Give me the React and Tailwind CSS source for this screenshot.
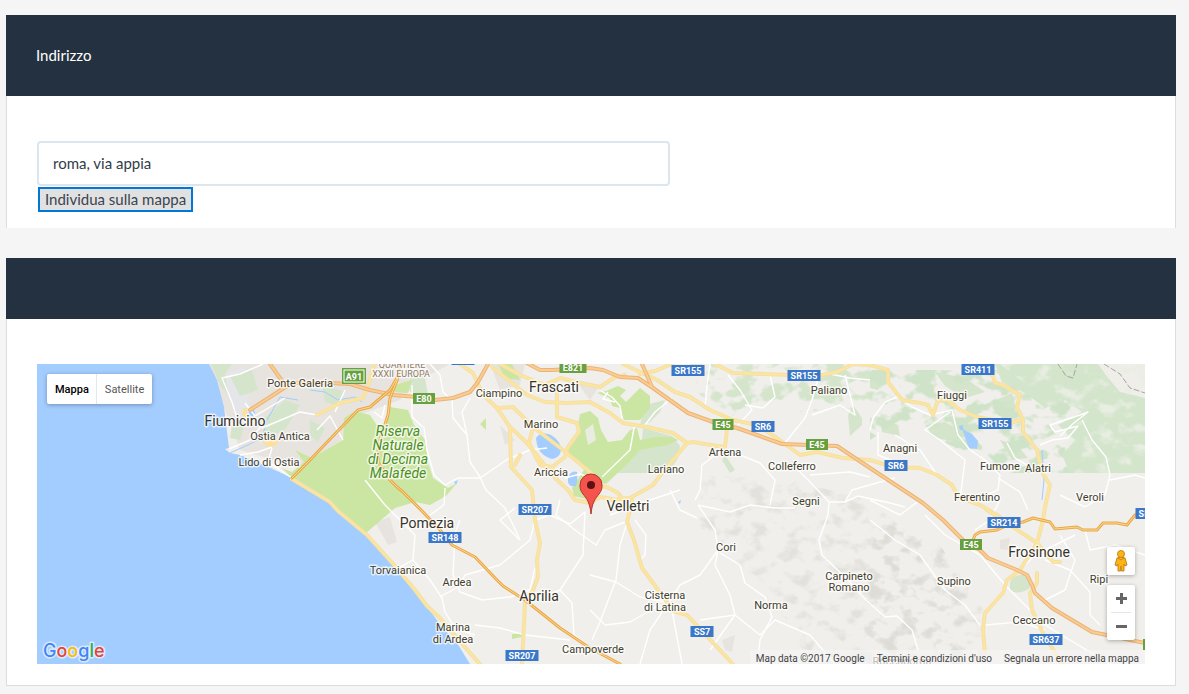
import React, { useState } from "react";

const minorRoads = [
    "M263 364 L240 374 L222 378 L232 402 L237 418 M245 403 L255 416 L285 398 M262 428 L300 412 L317 415",
    "M229 449 L250 440 L262 425 M240 455 L258 452 L272 447 M292 478 L268 462 L272 448",
    "M317 430 L330 416 L343 440 M374 412 L382 418 L385 405 M345 390 L335 412",
    "M412 385 L412 417 L424 428 L427 450 L434 475 L445 485 L458 478 L480 478 L508 459 L530 450 L547 448",
    "M430 364 L440 375 L443 392 L452 400 L453 418 L467 435 L470 462 L480 477 L486 490 L505 508 L520 540",
    "M470 398 L462 412 L467 435 M445 488 L444 505 L430 515",
    "M365 480 L385 505 L400 520 L415 535 L413 560 L430 580 L442 598 L445 612 L455 628 L475 635",
    "M413 560 L400 567 M440 597 L458 587 L465 575 L500 565 L530 540 L535 520",
    "M460 520 L455 533 L453 575 L460 592 L482 600 L510 597 L530 590 L535 568",
    "M475 625 L500 628 L525 635 L570 640 M540 598 L560 590 L572 603 L574 635 L590 647",
    "M520 540 L500 520 L515 508 M535 520 L550 515 L570 524 L585 512 L583 555 L560 590",
    "M560 500 L556 515 L575 530 L596 545 L605 530 L625 522",
    "M627 523 L620 545 L616 580 L600 622 L592 640 M616 582 L640 597 L665 602 M590 575 L616 582 M590 610 L605 625 L630 622 L660 605",
    "M667 605 L650 630 L640 664 M671 605 L682 664 M700 620 L735 615 L760 635 L775 620 L810 635 L835 664",
    "M635 520 L646 535 L645 555 L640 560 M698 505 L715 530 L718 550 L700 575 L680 585 L667 605",
    "M718 550 L715 565 L730 595 L735 615 M720 553 L740 565 L745 583 L765 597 L772 617 L760 640 L757 664 M735 615 L710 650",
    "M602 477 L630 450 L634 428 L637 424 M645 425 L655 412 L672 398",
    "M601 391 L612 397 L620 406 L622 418 M608 392 L603 399 L615 402 M565 478 L580 474 L592 478",
    "M710 364 L707 385 L705 408 M728 375 L740 390 L752 410 L738 425 M770 375 L775 397 L763 408 L745 405",
    "M870 380 L850 378 L820 372 L812 400 L805 418 L785 443 M812 415 L840 405 L855 415 L845 375",
    "M798 470 L808 480 L829 502 L828 515 L819 540 L822 555 L850 582 L866 600 L885 617 L897 616 L912 630 L918 650",
    "M829 502 L845 502 L858 496 L890 503 L905 507 M845 502 L852 490 L880 482 L895 478",
    "M810 475 L850 472 L870 477 M722 450 L702 465 L700 490 L695 500",
    "M728 450 L760 463 L775 480 L770 505 M698 505 L730 512 L750 505 L775 508 L795 508 M670 490 L680 510 L697 518",
    "M610 515 L650 500 L680 490",
    "M870 430 L873 418 L885 402 L897 397 L912 407 L930 415 L952 410 L958 435 L970 450 L985 460",
    "M895 435 L920 450 L937 475 M878 432 L878 455 L895 462 M950 412 L925 430 L940 440 L965 460 L960 500",
    "M985 460 L1000 475 L998 490 L975 500 M998 478 L1020 492 L1028 510 M1007 443 L1015 458 L1035 470",
    "M1082 420 L1092 440 L1106 457 L1110 475 L1105 495 L1085 507 M1110 480 L1135 475 L1145 478 M1085 507 L1060 495",
    "M1040 445 L1052 440 L1068 438 L1078 426 L1055 432 L1050 425 L1065 420 L1080 415 L1088 412 L1075 422 L1060 436",
    "M870 500 L900 515 L920 500 M870 520 L895 540 L920 555 L945 590 L965 605 L980 625",
    "M925 515 L945 535 L980 555 L1005 585 L1020 600 L1045 625 L1070 640 L1110 664",
    "M1045 560 L1070 570 L1090 592 L1090 615 L1100 625 M1085 530 L1090 550 L1115 545 L1145 555 M1060 535 L1075 560 L1065 590 L1045 600",
    "M985 625 L1020 622 L1045 630 M1020 570 L1035 555 L1055 545 L1075 535 M1000 500 L990 520 L975 530",
];

const yellowRoads = [
    "M292 479 L330 502 L338 511 L367 535 L395 566 L405 578 L415 590 L427 606 L440 618 L455 636 L480 664",
    "M317 415 L340 403 L363 398 L370 380 L374 364",
    "M460 364 L473 373 L483 395 L497 408 L510 427 L527 443 L547 468",
    "M510 427 L511 467 L532 490 L535 520 L540 543 L537 560 L538 577 L533 590 L525 603 L522 664",
    "M497 408 L513 407 L533 427 L563 450 L590 472 L596 480",
    "M492 367 L527 395 L545 402 L567 403 L590 402 L610 413 L623 423 L647 427 L673 433 L687 443 L673 460 L662 473 L653 485 L630 498 L610 500",
    "M557 390 L557 417 L577 423 L579 432 L568 447 L565 457 L552 467 L555 478 L568 490 L575 500 L590 503 L600 497 L612 499",
    "M533 427 L529 443 L540 465 L552 467 M520 455 L515 465",
    "M500 364 L520 375 L545 385 L560 378 L580 383 L600 387 L615 377 L625 375",
    "M687 443 L693 442 L717 446 L725 447 L727 430 L733 420",
    "M590 485 L607 487 L618 493 L625 502",
    "M623 364 L657 380 L675 392 L690 397 L710 410 L733 420 L757 425 L777 438 L800 455 L817 452 L843 458 L870 460 L893 467 L920 468 L937 475 L952 485 L958 497 L980 505 L1000 517",
    "M640 374 L655 371 L672 364",
    "M715 364 L733 373 L790 375 L820 375 L837 372 L853 364 L870 365 L888 370 L888 382 L902 400 L920 403 L928 405 L933 415 L938 400 L947 400 L960 410 L977 417 L1010 423 L1020 420",
    "M992 364 L992 373 L995 383 L1003 385 L1020 395 L1017 407 L1023 420 L1023 432 L1037 450 L1042 472 L1050 485 L1045 507 L1043 520 L1037 543 L1020 570 L1007 580 L1003 593 L985 613 L983 630 L985 653",
    "M987 510 L1037 543 L1053 562 L1060 562",
    "M1037 573 L1037 583 L1030 593 L1032 610 L1043 633 L1062 664",
    "M632 500 L630 510 L627 522 L634 540 L642 568 L667 602 L673 611 L687 615 L733 664",
];

const motorways = [
    "M250 410 L284 388 L294 383 L330 383 L350 384 L370 390 L393 395 L417 397 L435 400 L453 398 L470 392 L478 382 L488 364",
    "M270 364 L285 385",
    "M523 361 L540 370 L552 370 L590 368 L603 370 L620 377 L638 378 L653 388 L688 413 L713 422 L737 428 L757 435 L782 444 L837 446 L870 468 L923 503 L943 520 L963 540 L980 550 L988 558 L1017 570 L1027 575 L1032 585 L1035 593 L1052 608 L1077 623 L1092 632 L1145 643",
    "M642 364 L652 387",
];

const highways = [
    "M398 378 L390 398 L388 415 L380 440 L378 462 L390 480 L397 487 L403 492 L413 502 L423 512 L440 530 L452 545 L475 557 L495 578 L503 586 L525 600 L540 612 L560 628 L590 648 L620 664",
    "M292 478 L310 460 L358 410 L370 407 L390 390 L397 378 L402 364",
    "M973 540 L975 535 L980 532 L997 530 L1010 524 L1023 522 L1033 518 L1050 522 L1055 529 L1077 527 L1083 530 L1097 530 L1103 523 L1117 523 L1127 525 L1135 515 L1145 510",
];

// [name, center x, baseline]
const towns = [
    ["Ponte Galeria", 300, 387],
    ["Ostia Antica", 280, 440],
    ["Lido di Ostia", 269, 466],
    ["Ciampino", 499, 397],
    ["Marino", 541, 428],
    ["Ariccia", 551, 476],
    ["Lariano", 666, 473],
    ["Artena", 725, 456],
    ["Paliano", 829, 394],
    ["Colleferro", 792, 470],
    ["Segni", 806, 505],
    ["Fiuggi", 952, 399],
    ["Anagni", 900, 452],
    ["Fumone", 1000, 470],
    ["Alatri", 1038, 472],
    ["Ferentino", 977, 501],
    ["Veroli", 1090, 501],
    ["Torvaianica", 398, 574],
    ["Ardea", 457, 586],
    ["Marina", 453, 631],
    ["di Ardea", 453, 643],
    ["Cisterna", 665, 599],
    ["di Latina", 665, 611],
    ["Cori", 726, 551],
    ["Norma", 771, 609],
    ["Carpineto", 849, 580],
    ["Romano", 849, 591],
    ["Supino", 954, 585],
    ["Ceccano", 1034, 624],
    ["Ripi", 1099, 583],
    ["Campoverde", 593, 653],
    ["Roccagorga", 902, 665],
];

const cities = [
    ["Fiumicino", 235, 426],
    ["Frascati", 554, 392],
    ["Velletri", 628, 511],
    ["Pomezia", 427, 528],
    ["Aprilia", 539, 601],
    ["Frosinone", 1039, 557],
];

const park = [
    ["Riserva", 398, 436],
    ["Naturale", 398, 450],
    ["di Decima", 398, 464],
    ["Malafede", 398, 478],
];

// [code, center x, center y, width]
const blueShields = [
    ["SR155", 688, 370, 33],
    ["SR155", 804, 375, 33],
    ["SR411", 978, 369, 33],
    ["SR155", 995, 423, 33],
    ["SR6", 763, 426, 23],
    ["SR6", 896, 465, 23],
    ["SR207", 535, 509, 33],
    ["SR148", 445, 537, 33],
    ["SR214", 1004, 522, 33],
    ["SR207", 522, 655, 33],
    ["SS7", 702, 631, 23],
    ["SR637", 1046, 639, 33],
    ["SR214", 1152, 513, 33],
    ["", 463, 359, 23],
];

const greenShields = [
    ["E80", 424, 398, 22],
    ["E821", 573, 367, 27],
    ["E45", 723, 424, 21],
    ["E45", 817, 444, 22],
    ["E45", 971, 544, 22],
    ["E45", 1154, 644, 22],
];

function Roads({ paths, casing, fill, width }) {
    return (
        <g fill="none" strokeLinejoin="round" strokeLinecap="round">
            {paths.map((d, i) => (
                <path key={i} d={d} stroke={casing} strokeWidth={width + 1} />
            ))}
            {paths.map((d, i) => (
                <path key={i} d={d} stroke={fill} strokeWidth={width - 1} />
            ))}
        </g>
    );
}

function Labels({ items, className }) {
    return (
        <g
            className={className}
            textAnchor="middle"
            stroke="#fff"
            strokeOpacity="0.7"
            strokeWidth="3"
            strokeLinejoin="round"
            paintOrder="stroke"
        >
            {items.map(([name, x, y]) => (
                <text key={name} x={x} y={y}>{name}</text>
            ))}
        </g>
    );
}

function Shields({ items, color }) {
    return (
        <g className="text-[9px] font-bold" textAnchor="middle">
            {items.map(([code, x, y, width], i) => (
                <g key={i}>
                    <rect x={x - width / 2} y={y - 5} width={width} height="11" fill={color} />
                    <text x={x} y={y + 4} fill="#fff">{code}</text>
                </g>
            ))}
        </g>
    );
}

function MapDrawing() {
    return (
        <svg
            viewBox="37 364 1108 300"
            preserveAspectRatio="xMidYMid slice"
            className="block w-full h-[300px] font-[Roboto,sans-serif]"
            role="img"
            aria-label="Mappa"
        >
            <defs>
                {/* breaks a solid shape into woodland patches */}
                <filter id="woods" x="0" y="0" width="100%" height="100%">
                    <feTurbulence type="fractalNoise" baseFrequency="0.045 0.06" numOctaves="3" seed="7" />
                    <feColorMatrix values="0 0 0 0 0  0 0 0 0 0  0 0 0 0 0  9 0 0 0 -4.3" />
                    <feComposite in="SourceGraphic" operator="in" />
                </filter>
                {/* soft hill shading */}
                <filter id="relief" x="0" y="0" width="100%" height="100%">
                    <feTurbulence type="fractalNoise" baseFrequency="0.06 0.08" numOctaves="3" seed="21" />
                    <feColorMatrix values="0 0 0 0 0  0 0 0 0 0  0 0 0 0 0  4 0 0 0 -2" />
                    <feComposite in="SourceGraphic" operator="in" />
                </filter>
            </defs>

            <rect x="37" y="364" width="1108" height="300" fill="#f0efeb" />

            {/* built-up areas */}
            <g fill="#e7e4df">
                <path d="M209 364 H450 L420 380 L400 400 L345 420 L342 440 L300 468 L240 450 L225 410 Z" />
                <path d="M490 364 H525 L520 385 L500 390 Z M500 425 L515 440 L505 445 Z M575 380 L600 385 L590 400 Z" />
                <path d="M375 522 L390 517 L397 542 L388 545 Z M722 640 L735 635 L732 652 L725 650 Z M1000 540 L1010 538 L1008 550 L1000 549 Z" />
            </g>
            <path d="M224 375 L245 366 L250 418 L240 425 Z" fill="#e5e6e9" />

            {/* woods */}
            <g fill="#d4e5cc">
                <path d="M211 364 H232 L225 374 L228 395 L220 385 Z M230 376 L252 370 L258 390 L240 396 Z M262 420 L285 400 L300 405 L285 430 L265 438 Z M232 425 L245 423 L240 440 L230 438 Z" />
                <path d="M322 384 L345 392 L335 405 L325 402 Z M310 420 L325 428 L318 442 L310 435 Z M410 370 L425 378 L428 395 L410 392 Z" />
                <path d="M645 405 L665 400 L660 412 L650 422 L640 425 Z M643 428 L672 436 L680 446 L678 458 L668 473 H618 L628 455 L642 440 Z" />
                <path d="M1010 582 Q1014 574 1024 575 L1030 580 L1030 588 Q1018 596 1010 590 Z" />
                <path d="M853 405 L862 418 L862 425 L850 436 L848 415 Z M725 455 L735 470 L730 473 L722 460 Z" />
                <path d="M925 425 L945 422 L962 432 L958 442 L935 438 Z M880 418 L898 425 L900 436 L882 432 Z M935 372 L965 378 L985 392 L965 398 L945 386 Z" />
                <path d="M992 402 L1012 393 L1016 408 L1008 420 L998 415 Z M1000 440 L1018 446 L1028 458 L1012 460 Z M870 378 L885 380 L878 390 L870 388 Z" />
            </g>
            <path d="M690 364 H870 V408 L800 412 L760 400 L740 420 L700 395 Z" fill="#d4e5cc" filter="url(#woods)" />
            <path d="M870 370 H1145 V473 H1000 L960 450 L900 420 L870 440 Z" fill="#cfe3c8" filter="url(#woods)" />
            <path
                d="M995 364 H1145 V473 H1070 L1062 455 L1075 440 L1058 425 L1082 412 L1065 400 L1045 408 L1032 398 L1020 390 L1002 382 Z"
                fill="#d3e5cb"
            />
            <path d="M1098 364 H1145 V398 L1120 392 L1108 378 Z" fill="#efeee9" />
            <path d="M1000 364 H1145 V473 H1075 L1062 425 L1040 395 Z" fill="#e8eee2" filter="url(#relief)" />

            {/* relief */}
            <path d="M700 475 L790 480 L870 500 L940 560 L960 664 H810 L770 590 L700 530 Z" fill="#e2e1dc" filter="url(#relief)" />
            <path d="M875 520 L940 545 L990 620 L980 664 H860 Z" fill="#dedcd7" filter="url(#relief)" />

            {/* parks */}
            <g fill="#cbe6a3">
                <path d="M343 440 L344 418 L355 411 L370 415 L376 424 L384 426 L390 407 L408 410 L414 425 L425 440 L428 462 L433 478 L448 488 L457 483 L446 496 L430 505 L415 502 L395 508 L366 533 L338 510 L292 478 L282 468 L292 472 L304 462 L295 450 L312 458 Z" />
                <path d="M580 414 L590 411 L598 418 L601 430 L608 442 L622 440 L630 430 L637 428 L640 440 L655 437 L672 437 L678 440 L668 445 L640 450 L625 466 L606 484 L588 480 L590 500 L574 496 L572 488 L584 470 L566 450 L576 436 Z" />
                <path d="M597 393 L606 391 L618 386 L626 390 L620 396 L626 402 L632 396 L640 388 L650 396 L650 408 L645 414 L640 420 L624 420 L620 408 L612 406 L610 398 Z" />
                <path d="M480 424 L486 418 L486 430 Z M512 634 H522 V637 L512 639 Z M498 364 H512 L520 380 L505 378 Z M395 385 L412 380 L408 393 L395 392 Z" />
            </g>
            <path d="M585 430 L593 424 L596 440 L588 445 Z" fill="#e9ece0" />

            {/* sea and lakes */}
            <g fill="#a3ccff">
                <path d="M37 364 H209 L217 380 L224 407 L229 448 L225 449 L230 453 L240 455 L264 465 L292 478 L317 493 L338 511 L365 534 L393 566 L413 589 L427 607 L443 628 L457 643 L470 664 H37 Z" />
                <path d="M536 438 Q541 431 551 435 Q561 441 561 450 Q560 458 552 459 Q537 455 536 438 Z" />
                <path d="M568 478 Q571 470 577 472 Q578 480 576 486 Q567 488 568 478 Z" />
                <path d="M962 428 L966 431 L972 434 L978 441 L977 449 L969 448 L966 440 Z M959 426 L963 425 L963 430 L960 430 Z" />
                <path d="M454 482 L458 480 L456 485 Z M678 502 L681 500 L680 504 Z" />
                <circle cx="252" cy="413" r="3" />
            </g>
            <path
                d="M230 453 L250 444 L262 438 L267 420 L280 397 L298 400 M310 390 L325 392 L338 400 L355 397 L362 402 M1042 450 L1044 480 L1042 500"
                fill="none"
                stroke="#a3ccff"
                strokeWidth="1"
            />

            <g fill="none" stroke="#fff" strokeWidth="1.4" strokeLinejoin="round">
                {minorRoads.map((d, i) => (
                    <path key={i} d={d} />
                ))}
            </g>
            <path
                d="M1058 364 L1066 376 L1073 378 L1077 364 M1104 364 L1120 374 L1130 388 L1145 393"
                fill="none"
                stroke="#a5a5a5"
                strokeWidth="1"
                strokeDasharray="6 2"
            />
            <path d="M262 441 H279 L275 446 L268 447 Z M243 408 H247 V417 H242 Z" fill="#fbe19c" />
            <Roads paths={yellowRoads} casing="#f3e0a8" fill="#fde59f" width={3} />
            <Roads paths={motorways} casing="#e9b477" fill="#fccb90" width={3} />
            <Roads paths={highways} casing="#eaa846" fill="#fdd793" width={2} />

            <Labels items={towns} className="text-[11px] fill-[#433d2e]" />
            <Labels items={cities} className="text-[14px] fill-[#38332a]" />
            <Labels items={park} className="text-[14px] italic fill-[#4c8f1f]" />
            <Labels
                items={[["QUARTIERE", 402, 368], ["XXXII EUROPA", 401, 377]]}
                className="text-[9px] fill-[#8e7b66]"
            />

            <Shields items={blueShields} color="#3a77c8" />
            <Shields items={greenShields} color="#67a03f" />
            <rect x="342" y="368" width="24" height="16" fill="#67a03f" />
            <rect x="344" y="370" width="20" height="12" fill="none" stroke="#fff" strokeWidth="1" />
            <text x="354" y="380" textAnchor="middle" fill="#fff" className="text-[9px] font-bold">A91</text>

            {/* marker */}
            <path
                d="M591 514 C590 503 587 499 583 494 C580 490 580 488 580 485 A11 11 0 0 1 602 485 C602 488 602 490 599 494 C595 499 592 503 591 514 Z"
                fill="#f5544d"
                stroke="#b4312c"
                strokeWidth="1"
            />
            <circle cx="591" cy="485" r="4" fill="#5c1212" />
        </svg>
    );
}

function Pegman() {
    return (
        <svg viewBox="0 0 14 22" className="w-[14px] h-[22px]" aria-hidden="true">
            <path
                d="M3 8 Q7 6 11 8 L13 15 L11 16 L10 14 L10 21 H7.500 L7 16 L6.500 21 H4 L4 14 L3 16 L1 15 Z"
                fill="#fbb516"
                stroke="#c8851a"
                strokeWidth="1"
                strokeLinejoin="round"
            />
            <path d="M4 8 L7 10 L10 8" fill="none" stroke="#c8851a" strokeWidth="1" />
            <circle cx="7" cy="4" r="3.500" fill="#fbb516" stroke="#c8851a" strokeWidth="1" />
        </svg>
    );
}

function GoogleLogo() {
    return (
        <svg viewBox="0 0 68 26" className="w-[68px] h-[26px]" role="img" aria-label="Google">
            <text
                x="1"
                y="19"
                className="text-[18px] font-medium font-[Inter,sans-serif]"
                stroke="#fff"
                strokeOpacity="0.6"
                strokeWidth="3"
                strokeLinejoin="round"
                paintOrder="stroke"
            >
                <tspan fill="#4285f4">G</tspan>
                <tspan fill="#ea4335">o</tspan>
                <tspan fill="#fbbc05">o</tspan>
                <tspan fill="#4285f4">g</tspan>
                <tspan fill="#34a853">l</tspan>
                <tspan fill="#ea4335">e</tspan>
            </text>
        </svg>
    );
}

function MapView() {
    const [mapType, setMapType] = useState("Mappa");

    return (
        <div className="relative overflow-hidden font-[Roboto,sans-serif]">
            <MapDrawing />

            {/* Map type */}
            <div className="absolute left-[10px] top-[10px] flex h-[30px] rounded-xs bg-white shadow-[0_1px_4px_rgba(0,0,0,0.3)] text-[11px]">
                {["Mappa", "Satellite"].map((type) => (
                    <button
                        key={type}
                        onClick={() => setMapType(type)}
                        className={
                            type === mapType
                                ? "pl-2 pr-[7px] font-medium text-black"
                                : "px-2 border-l border-gray-200 text-[#565656]"
                        }
                    >
                        {type}
                    </button>
                ))}
            </div>

            {/* Street view and zoom */}
            <div className="absolute right-[10px] bottom-[24px] flex flex-col gap-[10px]">
                <button
                    aria-label="Street View"
                    className="flex w-7 h-7 items-center justify-center rounded-xs bg-white shadow-[0_1px_4px_rgba(0,0,0,0.3)]"
                >
                    <Pegman />
                </button>
                <div className="flex flex-col items-center rounded-xs bg-white shadow-[0_1px_4px_rgba(0,0,0,0.3)]">
                    <button aria-label="Zoom avanti" className="flex w-7 h-[27px] items-center justify-center">
                        <svg viewBox="0 0 11 11" className="w-[11px] h-[11px]" aria-hidden="true">
                            <path d="M4 0 H7 V4 H11 V7 H7 V11 H4 V7 H0 V4 H4 Z" fill="#666" />
                        </svg>
                    </button>
                    <div className="w-5 h-px bg-[#e6e6e6]" />
                    <button aria-label="Zoom indietro" className="flex w-7 h-[27px] items-center justify-center">
                        <svg viewBox="0 0 11 3" className="w-[11px] h-[3px]" aria-hidden="true">
                            <path d="M0 0 H11 V3 H0 Z" fill="#666" />
                        </svg>
                    </button>
                </div>
            </div>

            <div className="absolute left-[5px] bottom-0">
                <GoogleLogo />
            </div>

            <div className="absolute right-0 bottom-0 flex h-[14px] gap-3 bg-[#f5f5f5]/70 pt-[2px] px-[6px] text-[10px] leading-[14px] text-[#444]">
                <span>Map data ©2017 Google</span>
                <a href="#termini">Termini e condizioni d'uso</a>
                <a href="#segnala">Segnala un errore nella mappa</a>
            </div>
        </div>
    );
}

export default function App() {
    const [address, setAddress] = useState("roma, via appia");

    return (
        <div className="min-h-screen bg-[#f5f5f5] pt-[15px] pb-2 pl-[6px] pr-[13px] font-[Lato,sans-serif] text-[15px] leading-[21px] text-[#34495e]">
            {/* Address */}
            <section className="mb-[30px] bg-white">
                <header className="bg-[#243140] px-[30px] py-[30px] text-white">
                    <label htmlFor="address">Indirizzo</label>
                </header>
                <div className="border-x border-[#ddd] px-[30px] pt-[45px] pb-4">
                    <input
                        id="address"
                        type="text"
                        value={address}
                        onChange={(e) => setAddress(e.target.value)}
                        className="block w-4/7 h-[45px] rounded-sm border-2 border-[#dce6ee] bg-white px-[14px] pb-[2px] text-[#333c48]"
                    />
                    <button className="mt-px ml-px block border-2 border-[#0078d7] bg-[#e1e1e1] px-[5px] text-[#3a444f]">
                        Individua sulla mappa
                    </button>
                </div>
            </section>

            {/* Map */}
            <section className="bg-white">
                <header className="h-[61px] bg-[#243140]" />
                <div className="border-x border-b border-[#ddd] px-[30px] pt-[45px] pb-[21px]">
                    <MapView />
                </div>
            </section>
        </div>
    );
}
